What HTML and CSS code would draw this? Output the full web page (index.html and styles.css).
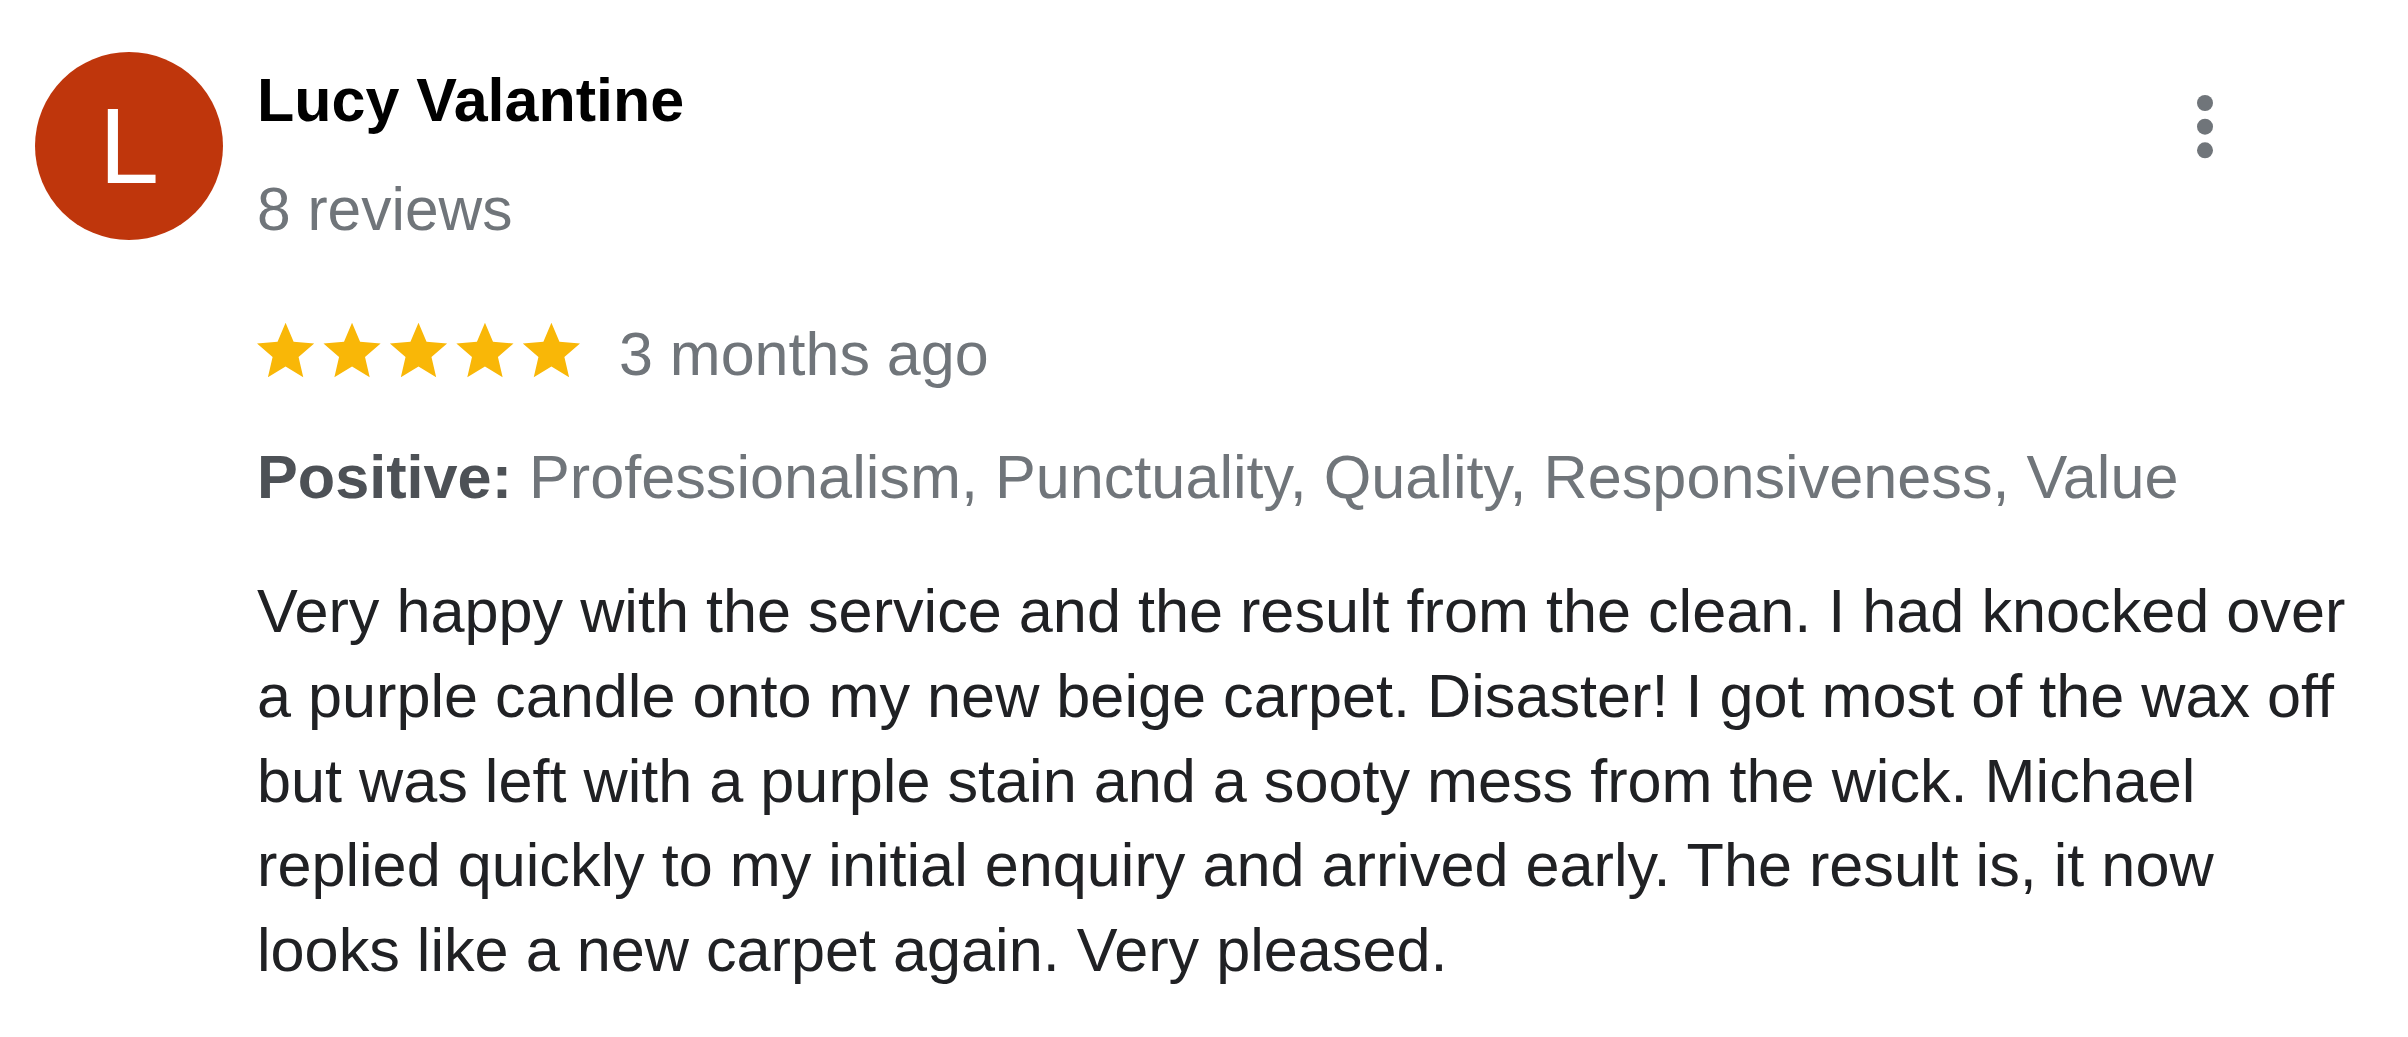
FILE: index.html
```html
<!DOCTYPE html>
<html lang="en">
<head>
<meta charset="utf-8">
<title>Review</title>
<link rel="stylesheet" href="styles.css">
</head>
<body>
<article class="review">
  <div class="avatar">L</div>
  <div class="main">
    <header class="head">
      <div class="who">
        <div class="name">Lucy Valantine</div>
        <div class="count">8 reviews</div>
      </div>
      <button class="menu" aria-label="More options">
        <svg class="dots" viewBox="0 0 16 64" width="16" height="64">
          <circle cx="8" cy="8" r="8"/>
          <circle cx="8" cy="31.7" r="8"/>
          <circle cx="8" cy="55.3" r="8"/>
        </svg>
      </button>
    </header>
    <div class="meta">
      <svg class="stars" viewBox="2 2 113 19.02" width="323" height="56" aria-label="5 stars">
        <path d="M12 17.27L18.18 21l-1.64-7.03L22 9.24l-7.19-.61L12 2 9.19 8.63 2 9.24l5.46 4.73L5.82 21z"/>
        <path transform="translate(23.25 0)" d="M12 17.27L18.18 21l-1.64-7.03L22 9.24l-7.19-.61L12 2 9.19 8.63 2 9.24l5.46 4.73L5.82 21z"/>
        <path transform="translate(46.5 0)" d="M12 17.27L18.18 21l-1.64-7.03L22 9.24l-7.19-.61L12 2 9.19 8.63 2 9.24l5.46 4.73L5.82 21z"/>
        <path transform="translate(69.75 0)" d="M12 17.27L18.18 21l-1.64-7.03L22 9.24l-7.19-.61L12 2 9.19 8.63 2 9.24l5.46 4.73L5.82 21z"/>
        <path transform="translate(93 0)" d="M12 17.27L18.18 21l-1.64-7.03L22 9.24l-7.19-.61L12 2 9.19 8.63 2 9.24l5.46 4.73L5.82 21z"/>
      </svg>
      <span class="date">3 months ago</span>
    </div>
    <p class="tags"><b class="tags-label">Positive:</b> Professionalism, Punctuality, Quality, Responsiveness, Value</p>
    <p class="text">Very happy with the service and the result from the clean. I had knocked over a purple candle onto my new beige carpet. Disaster! I got most of the wax off but was left with a purple stain and a sooty mess from the wick. Michael replied quickly to my initial enquiry and arrived early. The result is, it now looks like a new carpet again. Very pleased.</p>
  </div>
</article>
</body>
</html>
```

FILE: styles.css
```css
html, body {
  margin: 0;
  padding: 0;
  background: #ffffff;
}

body {
  font-family: "Liberation Sans", Arial, Helvetica, sans-serif;
  color: #202124;
}

.review {
  display: flex;
  align-items: flex-start;
  gap: 34px;
  padding: 52px 48px 0 35px;
}

.avatar {
  flex: 0 0 188px;
  width: 188px;
  height: 188px;
  border-radius: 50%;
  background: #bf360c;
  color: #ffffff;
  font-size: 108px;
  line-height: 108px;
  display: flex;
  align-items: center;
  justify-content: center;
}

.main {
  flex: 1;
  min-width: 0;
  margin-top: 12px;
}

.head {
  display: flex;
  justify-content: space-between;
  align-items: flex-start;
}

.name {
  font-size: 61px;
  line-height: 72px;
  font-weight: 700;
  color: #000000;
}

.count {
  margin-top: 37px;
  font-size: 60.5px;
  line-height: 72px;
  color: #70757a;
}

.menu {
  margin: 31px 147px 0 0;
  padding: 0;
  border: 0;
  background: none;
  line-height: 0;
}

.dots {
  display: block;
  fill: #70757a;
}

.meta {
  margin-top: 73px;
  display: flex;
  align-items: flex-start;
  gap: 39px;
}

.stars {
  display: block;
  margin-top: 4px;
  fill: #f9b707;
}

.date {
  font-size: 61px;
  line-height: 72px;
  color: #70757a;
}

.tags {
  margin: 51px 0 0;
  font-size: 61.2px;
  line-height: 72px;
  color: #70757a;
}

.tags-label {
  font-weight: 700;
  color: #4d5156;
}

.text {
  margin: 56px 0 0;
  font-size: 61.2px;
  line-height: 84.75px;
  color: #202124;
}
```
